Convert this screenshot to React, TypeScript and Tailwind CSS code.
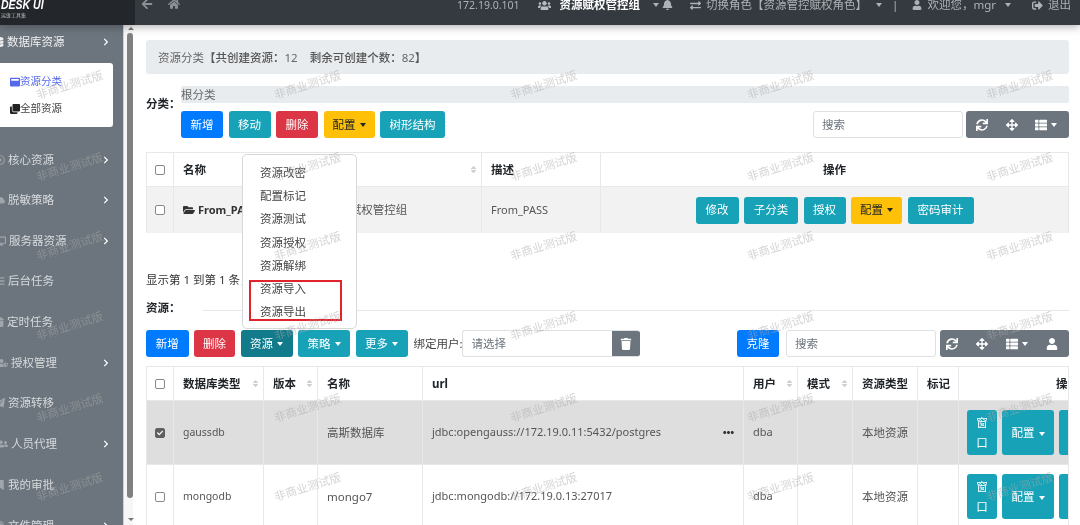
import { FaArrowLeft, FaHome, FaUsers, FaBell, FaUser, FaSignOutAlt, FaFolderOpen, FaSync, FaArrowsAlt, FaThList, FaTrash, FaEllipsisH, FaChevronRight, FaExchangeAlt, FaSort, FaCheck, FaWindowMaximize, FaClone, FaDatabase, FaRegDotCircle, FaCloud, FaDesktop, FaBars, FaCalendar, FaUserShield, FaPaperPlane, FaUserFriends, FaBookmark, FaFile } from "react-icons/fa";

const Caret = ({ className = "border-t-white" }: { className?: string }) => (
  <span className={`inline-block ml-1 align-middle w-0 h-0 border-x-[3.5px] border-x-transparent border-t-[4px] ${className}`} />
);

const sideItems = [
  { label: "核心资源", pad: "pl-[8px]", arrow: true, h: "h-[41px]", icon: FaRegDotCircle },
  { label: "脱敏策略", pad: "pl-[8px]", arrow: true, h: "h-[40px]", icon: FaCloud },
  { label: "服务器资源", pad: "pl-[9px]", arrow: true, h: "h-[41px]", icon: FaDesktop },
  { label: "后台任务", pad: "pl-[8px]", arrow: false, h: "h-[40px]", icon: FaBars },
  { label: "定时任务", pad: "pl-[7px]", arrow: false, h: "h-[41px]", icon: FaCalendar },
  { label: "授权管理", pad: "pl-[11px]", arrow: true, h: "h-[41px]", icon: FaUserShield },
  { label: "资源转移", pad: "pl-[8px]", arrow: false, h: "h-[40px]", icon: FaPaperPlane },
  { label: "人员代理", pad: "pl-[11px]", arrow: true, h: "h-[41px]", icon: FaUserFriends },
  { label: "我的审批", pad: "pl-[8px]", arrow: false, h: "h-[41px]", icon: FaBookmark },
  { label: "文件管理", pad: "pl-[8px]", arrow: true, h: "h-[41px]", icon: FaFile },
];

const Btn = ({ children, color, w, h = "h-[27px]" }: { children: React.ReactNode; color: string; w: string; h?: string }) => (
  <button className={`${color} ${w} ${h} rounded-[3px] text-[11.5px] flex items-center justify-center shrink-0 whitespace-nowrap`}>{children}</button>
);

const Box = ({ checked }: { checked?: boolean }) => (
  <span className={`w-[10px] h-[10px] rounded-[2px] border flex items-center justify-center ${checked ? "bg-[#5f5f5f] border-[#5f5f5f]" : "bg-white border-[#888]"}`}>
    {checked && <FaCheck className="text-white text-[6px]" />}
  </span>
);

const Sort = () => <FaSort className="text-[#ccd0d4] text-[9px] shrink-0" />;

const Cell = ({ w, children, bold, center, row }: { w: string; children?: React.ReactNode; bold?: boolean; center?: boolean; row?: boolean }) => (
  <div className={`${w} shrink-0 h-full border-r border-[#e6e8ea] flex items-center whitespace-nowrap ${center ? "justify-center" : row ? "justify-between pl-[9px] pr-[3px]" : "pl-[9px]"} ${bold ? "font-bold text-[#212529]" : ""}`}>
    {children}
  </div>
);

const Toolset = ({ user, w }: { user?: boolean; w: string }) => (
  <div className={`${w} h-[27px] bg-[#6c757d] rounded-[3px] flex items-center justify-between text-white text-[12px] shrink-0 ${user ? "pl-[6px] pr-[11px]" : "pl-[10px] pr-[12px]"}`}>
    <FaSync />
    <FaArrowsAlt />
    <span className="flex items-center"><FaThList /><Caret /></span>
    {user && <FaUser />}
  </div>
);

const ResourceRow = ({ type, name, url, checked, dots, h }: { type: string; name: string; url: string; checked?: boolean; dots?: boolean; h: string }) => (
  <div className={`flex ${h} text-[11.5px] text-[#555] border-b border-[#e6e8ea] ${checked ? "bg-[#dedede]" : ""}`}>
    <Cell w="w-[27px]" center><Box checked={checked} /></Cell>
    <Cell w="w-[90px]"><span className="text-[10.5px]">{type}</span></Cell>
    <Cell w="w-[54px]" />
    <Cell w="w-[105px]">{name}</Cell>
    <Cell w="w-[321px]" row>
      <span className="text-[11px]">{url}</span>
      {dots && <FaEllipsisH className="text-[#333] text-[11px] mr-[6px]" />}
    </Cell>
    <Cell w="w-[54px]"><span className="text-[11px]">dba</span></Cell>
    <Cell w="w-[55px]" />
    <Cell w="w-[65px]">本地资源</Cell>
    <Cell w="w-[41px]" />
    <div className="flex-1 flex items-center gap-[5px] pl-[8px] text-white">
      <button className="w-[30px] h-[45px] bg-[#17a2b8] rounded-[3px] leading-[20px] shrink-0">窗<br />口</button>
      <button className="w-[52px] h-[45px] bg-[#17a2b8] rounded-[3px] shrink-0">配置<Caret /></button>
      <button className="w-[52px] h-[45px] bg-[#17a2b8] rounded-[3px] shrink-0" />
    </div>
  </div>
);

const markCols = [35, 273, 509, 746, 985];
const markRows = [85, 167, 246, 326, 408, 487];

export default function App() {
  return (
    <div className="relative w-[1080px] h-[525px] overflow-hidden bg-white text-[#212529] text-[11.5px] blur-[0.35px] font-['Noto_Sans','Noto_Sans_CJK_SC',sans-serif]">
      {/* top bar */}
      <header className="relative z-20 flex h-[25px] bg-[#343a40] shadow-[0_2px_8px_rgba(0,0,0,0.3)] text-[#aeb2b6]">
        <div className="w-[135px] shrink-0 bg-[#23272b] pl-[1px] overflow-hidden">
          <div className="text-white italic font-bold text-[10.5px] leading-[11px] origin-top-left scale-y-[1.3] font-['Liberation_Sans',sans-serif] -mt-[3px] whitespace-nowrap">DESK UI</div>
          <div className="text-[#bbb] text-[5px] leading-[5px] mt-[5px] whitespace-nowrap">运维工具集</div>
        </div>
        <div className="flex items-start gap-[15px] pl-[6px] -mt-[2px] text-[12px] text-[#8b9095]">
          <FaArrowLeft />
          <FaHome />
        </div>
        <div className="ml-auto flex items-start text-[11.5px] leading-[14px] pr-[9px] whitespace-nowrap">
          <span className="mr-[18px] -mt-[2px] text-[10.5px]">172.19.0.101</span>
          <span className="flex items-center gap-[9px] -mt-[2px] text-white font-bold"><FaUsers className="text-[#b8bcc0] text-[13px]" />资源赋权管控组<Caret className="border-t-[#aeb2b6]" /></span>
          <FaBell className="ml-[3px] -mt-[1px] text-[11px]" />
          <span className="flex items-center gap-[5px] ml-[17px] -mt-[2px]"><FaExchangeAlt className="text-[11px]" />切换角色【资源管控赋权角色】<Caret className="border-t-[#aeb2b6]" /></span>
          <span className="ml-[10px] -mt-[2px]">|</span>
          <span className="flex items-center gap-[5px] ml-[14px] -mt-[2px]"><FaUser className="text-[10px]" />欢迎您，mgr<Caret className="border-t-[#aeb2b6]" /></span>
          <span className="flex items-center gap-[5px] ml-[21px] -mt-[2px]"><FaSignOutAlt className="text-[11px]" />退出</span>
        </div>
      </header>

      <div className="flex h-[500px]">
        {/* sidebar */}
        <aside className="w-[123px] shrink-0 bg-[#6c757d] text-[#d7dadd] overflow-hidden">
          <div className="h-[34px] flex items-center justify-between pl-[7px] pr-[13px] text-[#f0f0f0]">
            <span className="flex items-center"><FaDatabase className="text-[10px] -ml-[13px] mr-[3px]" />数据库资源</span>
            <FaChevronRight className="text-[8px] text-white" />
          </div>
          <div className="mt-[4px] mb-[12px] w-[113px] h-[64px] bg-white rounded-r-[3px] pl-[10px] pt-[11px] text-[10.5px]">
            <div className="flex items-center text-[#5468e8] h-[16px]"><FaWindowMaximize className="text-[10px]" />资源分类</div>
            <div className="flex items-center text-[#444] h-[16px] mt-[11px]"><FaClone className="text-[10px] text-[#222]" />全部资源</div>
          </div>
          {sideItems.map((item) => (
            <div key={item.label} className={`${item.h} ${item.pad} flex items-center justify-between pr-[13px]`}>
              <span className="flex items-center">
                <item.icon className="text-[10px] text-[#a0a6ab] -ml-[13px] mr-[3px]" />
                {item.label}
              </span>
              {item.arrow && <FaChevronRight className="text-[8px] text-white" />}
            </div>
          ))}
        </aside>

        {/* page scrollbar */}
        <div className="w-[10px] shrink-0 bg-[#f6f6f6] border-l border-[#d0d0d0] pl-[3px] flex flex-col items-start">
          <span className="mt-[2px] ml-[1px] w-0 h-0 border-x-[3px] border-x-transparent border-b-[3px] border-b-[#777]" />
          <div className="mt-[3px] w-[6px] h-[465px] bg-[#808080] rounded-[3px]" />
          <span className="mt-[20px] ml-[1px] w-0 h-0 border-x-[3px] border-x-transparent border-t-[3px] border-t-[#777]" />
        </div>

        <main className="w-[936px] shrink-0 pl-[13px] pt-[15px] overflow-hidden">
          <div className="h-[34px] bg-[#e9ecef] rounded-[3px] pl-[12px] flex items-center text-[#666] pt-[1px] whitespace-nowrap">
            资源分类<span className="font-medium text-[#555]">【共创建资源：</span>12<span className="ml-[12px] font-medium text-[#555]">剩余可创建个数：</span>82<span className="font-medium text-[#555]">】</span>
          </div>

          <div className="flex mt-[12px]">
            <div className="w-[35px] shrink-0 pt-[9px] font-bold whitespace-nowrap">分类：</div>
            <div className="flex-1 min-w-0">
              <div className="h-[17px] bg-[#e9ecef] rounded-[2px] leading-[17px] text-[#666]">根分类</div>
              <div className="flex items-center mt-[8px] text-white">
                <div className="flex gap-[5.5px]">
                  <Btn color="bg-[#007bff]" w="w-[42px]">新增</Btn>
                  <Btn color="bg-[#17a2b8]" w="w-[42px]">移动</Btn>
                  <Btn color="bg-[#dc3545]" w="w-[42px]">删除</Btn>
                  <Btn color="bg-[#ffc107] text-[#212529]" w="w-[51px]">配置<Caret className="border-t-[#212529]" /></Btn>
                  <Btn color="bg-[#17a2b8]" w="w-[65px]">树形结构</Btn>
                </div>
                <input readOnly placeholder="搜索" className="ml-auto w-[150px] h-[27px] border border-[#dde1e4] rounded-[3px] px-[8px] text-[11.5px] placeholder:text-[#6c757d]" />
                <div className="ml-[3px]"><Toolset w="w-[103px]" /></div>
              </div>
            </div>
          </div>

          {/* category table */}
          <div className="mt-[14px] border border-[#e6e8ea] border-b-0">
            <div className="flex h-[34px] border-b border-[#e6e8ea]">
              <Cell w="w-[27px]" center><Box /></Cell>
              <Cell w="w-[308px]" bold row><span>名称</span><Sort /></Cell>
              <Cell w="w-[119px]" bold>描述</Cell>
              <div className="flex-1 flex items-center justify-center font-bold">操作</div>
            </div>
            <div className="flex h-[46px] bg-[#f2f2f2] text-[#555]">
              <Cell w="w-[27px]" center><Box /></Cell>
              <Cell w="w-[308px]">
                <FaFolderOpen className="text-[#333] text-[12px] mr-[3px]" /><span className="font-bold text-[11px] text-[#333]">From_PASS</span>
                <span className="ml-[70px]">资源赋权管控组</span>
              </Cell>
              <Cell w="w-[119px]"><span className="text-[11px]">From_PASS</span></Cell>
              <div className="flex-1 flex items-center justify-center gap-[5.5px] text-white">
                <Btn color="bg-[#17a2b8]" w="w-[43px]">修改</Btn>
                <Btn color="bg-[#17a2b8]" w="w-[54px]">子分类</Btn>
                <Btn color="bg-[#17a2b8]" w="w-[42px]">授权</Btn>
                <Btn color="bg-[#ffc107] text-[#212529]" w="w-[51px]">配置<Caret className="border-t-[#212529]" /></Btn>
                <Btn color="bg-[#17a2b8]" w="w-[66px]">密码审计</Btn>
              </div>
            </div>
          </div>

          <div className="mt-[39px] h-[16px] leading-[16px] text-[#333] whitespace-nowrap">显示第 1 到第 1 条，总共 1 条记录</div>
          <div className="flex items-center mt-[12px] h-[16px] font-bold">
            <span className="w-[57px]">资源：</span>
            <div className="flex-1 border-b border-[#e6e8ea] mt-[4px]" />
          </div>

          <div className="flex items-center mt-[14px] text-white">
            <div className="flex gap-[5.5px]">
              <Btn color="bg-[#007bff]" w="w-[42.5px]">新增</Btn>
              <Btn color="bg-[#dc3545]" w="w-[41px]">删除</Btn>
              <Btn color="bg-[#117a8b]" w="w-[52px]">资源<Caret /></Btn>
              <Btn color="bg-[#17a2b8]" w="w-[52px]">策略<Caret /></Btn>
              <Btn color="bg-[#17a2b8]" w="w-[52px]">更多<Caret /></Btn>
            </div>
            <span className="ml-[6px] w-[48px] shrink-0 text-[#444] whitespace-nowrap">绑定用户:</span>
            <div className="flex h-[27px] w-[178px] rounded-[3px] overflow-hidden border border-[#dde1e4] border-r-0 shrink-0">
              <span className="flex-1 px-[9px] flex items-center text-[#6c757d]">请选择</span>
              <span className="w-[28px] bg-[#6c757d] flex items-center justify-center text-[12px]"><FaTrash /></span>
            </div>
            <div className="ml-auto flex">
              <Btn color="bg-[#007bff]" w="w-[42px]">克隆</Btn>
              <input readOnly placeholder="搜索" className="ml-[7px] w-[150px] h-[27px] border border-[#dde1e4] rounded-[3px] px-[8px] text-[11.5px] placeholder:text-[#6c757d]" />
              <div className="ml-[4px]"><Toolset user w="w-[129px]" /></div>
            </div>
          </div>

          {/* resource table */}
          <div className="mt-[9px] border border-[#e6e8ea] border-b-0 overflow-hidden">
            <div className="flex h-[34px] border-b border-[#e6e8ea]">
              <Cell w="w-[27px]" center><Box /></Cell>
              <Cell w="w-[90px]" bold row>数据库类型<Sort /></Cell>
              <Cell w="w-[54px]" bold row>版本<Sort /></Cell>
              <Cell w="w-[105px]" bold>名称</Cell>
              <Cell w="w-[321px]" bold>url</Cell>
              <Cell w="w-[54px]" bold row>用户<Sort /></Cell>
              <Cell w="w-[55px]" bold row>模式<Sort /></Cell>
              <Cell w="w-[65px]" bold>资源类型</Cell>
              <Cell w="w-[41px]" bold>标记</Cell>
              <div className="flex-1 font-bold flex items-center pl-[97px] whitespace-nowrap">操作</div>
            </div>
            <ResourceRow type="gaussdb" name="高斯数据库" url="jdbc:opengauss://172.19.0.11:5432/postgres" checked dots h="h-[64px]" />
            <ResourceRow type="mongodb" name="mongo7" url="jdbc:mongodb://172.19.0.13:27017" h="h-[64px]" />
          </div>
        </main>
      </div>

      {/* dropdown menu of 资源 */}
      <div className="absolute z-10 left-[242px] top-[154px] w-[115px] h-[175px] bg-white border border-[#d8d8d8] rounded-[5px] pl-[17px] pt-[6px] text-[#444] leading-[23.2px]">
        {["资源改密", "配置标记", "资源测试", "资源授权", "资源解绑", "资源导入", "资源导出"].map((t) => (
          <div key={t}>{t}</div>
        ))}
      </div>
      <div className="absolute z-10 left-[249px] top-[280px] w-[93px] h-[41px] border-2 border-[#e0242c]" />

      {/* watermarks */}
      {markRows.map((y) =>
        markCols.map((x) => (
          <span
            key={`${x}-${y}`}
            className="absolute z-30 -rotate-[17deg] text-[11.5px] leading-[16px] text-[#aaaaaa]/50 whitespace-nowrap pointer-events-none font-['Liberation_Serif','Noto_Sans_CJK_SC',serif]"
            style={{ left: x, top: y - 8 }}
          >
            非商业测试版
          </span>
        ))
      )}
    </div>
  );
}
